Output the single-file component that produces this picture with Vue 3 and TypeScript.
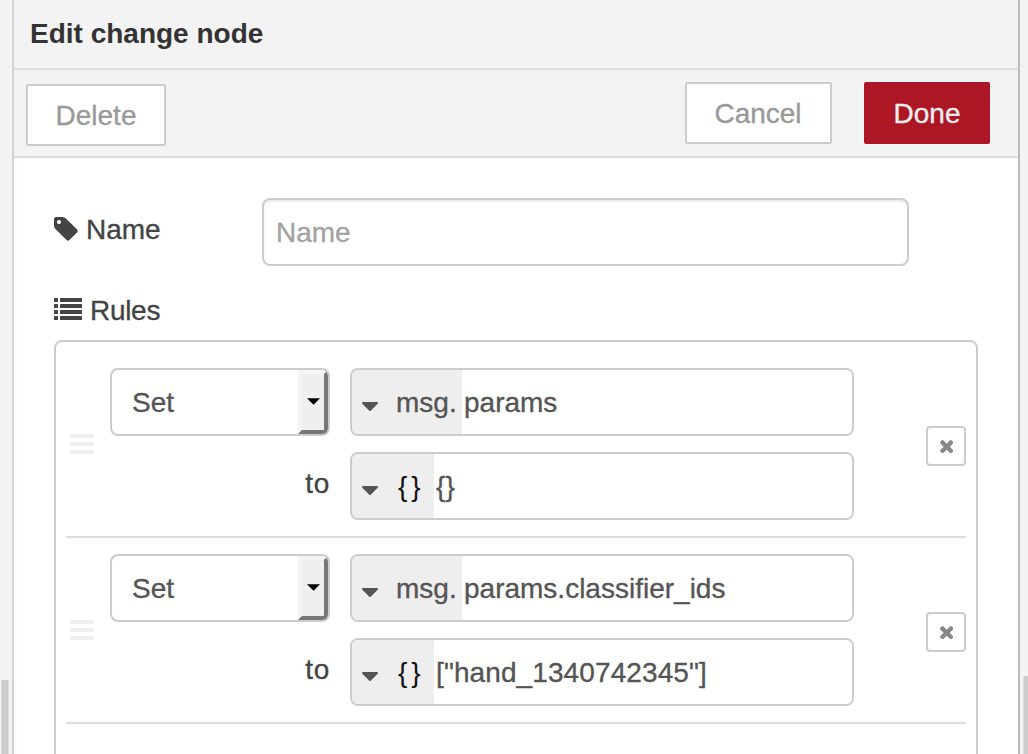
<script setup lang="ts">
import { ref } from 'vue'

interface Operand {
  prefix: string
  kind: 'msg' | 'json'
  value: string
}

interface Rule {
  id: number
  action: string
  property: Operand
  target: Operand
}

const name = ref('')

const rules = ref<Rule[]>([
  {
    id: 1,
    action: 'Set',
    property: { prefix: 'msg.', kind: 'msg', value: 'params' },
    target: { prefix: '{}', kind: 'json', value: '{}' },
  },
  {
    id: 2,
    action: 'Set',
    property: { prefix: 'msg.', kind: 'msg', value: 'params.classifier_ids' },
    target: { prefix: '{}', kind: 'json', value: '["hand_1340742345"]' },
  },
])

const operands = (rule: Rule): Operand[] => [rule.property, rule.target]

function removeRule(id: number) {
  rules.value = rules.value.filter((r) => r.id !== id)
}
</script>

<template>
  <div class="page">
    <div class="gutter gutter-left"><div class="thumb"></div></div>
    <main class="tray">
      <header class="title">Edit change node</header>
      <div class="toolbar">
        <button class="btn delete">Delete</button>
        <div class="actions">
          <button class="btn cancel">Cancel</button>
          <button class="btn primary">Done</button>
        </div>
      </div>
      <form class="body" @submit.prevent>
        <div class="name-row">
          <label class="label" for="node-name">
            <svg class="tag" viewBox="0 0 1536 1792">
              <path d="M448 448q0-53-37.5-90.5t-90.5-37.5-90.5 37.5-37.5 90.5 37.5 90.5 90.5 37.5 90.5-37.5 37.5-90.5zm1067 576q0 53-37 90l-491 492q-39 37-91 37-53 0-90-37l-715-716q-38-37-64.5-101t-26.5-117v-416q0-52 38-90t90-38h416q53 0 117 26.5t102 64.5l715 714q37 39 37 91z" />
            </svg>
            <span>Name</span>
          </label>
          <input id="node-name" v-model="name" class="name-input" placeholder="Name" />
        </div>
        <div class="label rules-label">
          <svg class="list" viewBox="0 0 28 22">
            <g v-for="i in 4" :key="i">
              <rect x="0" :y="(i - 1) * 6" width="4" height="4" rx="0.5" />
              <rect x="6" :y="(i - 1) * 6" width="22" height="4" rx="0.5" />
            </g>
          </svg>
          <span>Rules</span>
        </div>
        <div class="rules">
          <div v-for="rule in rules" :key="rule.id" class="rule">
            <div class="handle"><i></i><i></i><i></i></div>
            <div class="verbs">
              <div class="select">
                <span class="select-text">{{ rule.action }}</span>
                <span class="select-button">
                  <svg viewBox="0 0 14 7"><path d="M0 0H14L7 7Z" /></svg>
                </span>
              </div>
              <div class="to">to</div>
            </div>
            <div class="fields">
              <div v-for="(op, i) in operands(rule)" :key="i" class="typed">
                <div class="prefix" :class="op.kind">
                  <svg viewBox="384 640 1024 576">
                    <path d="M1408 704q0 26-19 45l-448 448q-19 19-45 19t-45-19l-448-448q-19-19-19-45t19-45 45-19h896q26 0 45 19t19 45z" />
                  </svg>
                  <span>{{ op.prefix }}</span>
                </div>
                <input v-model="op.value" class="value" :class="{ literal: op.kind === 'json' }" spellcheck="false" />
              </div>
            </div>
            <button class="remove" aria-label="Remove rule" @click="removeRule(rule.id)">
              <svg viewBox="302 366 1188 1188">
                <path d="M1490 1322q0 40-28 68l-136 136q-28 28-68 28t-68-28l-294-294-294 294q-28 28-68 28t-68-28l-136-136q-28-28-28-68t28-68l294-294-294-294q-28-28-28-68t28-68l136-136q28-28 68-28t68 28l294 294 294-294q28-28 68-28t68 28l136 136q28 28 28 68t-28 68l-294 294 294 294q28 28 28 68z" />
              </svg>
            </button>
          </div>
        </div>
      </form>
    </main>
    <div class="gutter gutter-right"><div class="thumb"></div></div>
  </div>
</template>

<style>
body {
  overflow: hidden;
}
</style>

<style scoped>
.page,
.page * {
  box-sizing: border-box;
}
.page {
  display: flex;
  width: 1028px;
  height: 754px;
  overflow: hidden;
  background: #f3f3f3;
  color: #444;
  font: 28px/40px "Liberation Sans", Arial, sans-serif;
  -webkit-text-stroke: 0.35px currentColor;
}
button,
input {
  font: inherit;
  margin: 0;
}
svg {
  display: block;
  flex: none;
  fill: currentColor;
}
.gutter {
  flex: none;
}
.gutter-left {
  width: 12px;
  padding: 680px 0 0 1px;
}
.gutter-left .thumb {
  width: 8px;
  height: 74px;
  background: #ccc;
  border: solid #dedede;
  border-width: 0 1px;
}
.gutter-right {
  width: 8px;
  padding: 676px 0 0 3px;
}
.gutter-right .thumb {
  height: 78px;
  background: #ccc;
  border-left: 1px solid #dedede;
}
.tray {
  width: 1008px;
  height: 754px;
  overflow: hidden;
  background: #fff;
  border-left: 2px solid #d3d3d3;
  border-right: 2px solid #bbb;
}
.title {
  height: 70px;
  padding: 14px 16px 0;
  background: #f3f3f3;
  border-bottom: 2px solid #ddd;
  color: #333;
  font-weight: bold;
  -webkit-text-stroke-width: 0;
}
.toolbar {
  display: flex;
  justify-content: space-between;
  height: 88px;
  padding: 12px 28px 0 12px;
  background: #f3f3f3;
  border-bottom: 2px solid #ddd;
}
.actions {
  display: flex;
  gap: 32px;
}
.btn {
  height: 62px;
  padding: 2px 0 0;
  background: #fff;
  border: 2px solid #ccc;
  border-radius: 2px;
  color: #999;
}
.delete {
  width: 140px;
  margin-top: 2px;
}
.cancel {
  width: 147px;
  padding-right: 1px;
}
.primary {
  width: 126px;
  background: #ad1625;
  border-color: #ad1625;
  color: #eee;
}
.body {
  padding: 40px 40px 0;
  box-shadow: inset 6px 0 6px -6px rgba(0, 0, 0, 0.04);
}
.name-row {
  display: flex;
  height: 68px;
}
.label {
  display: flex;
  align-items: flex-start;
  width: 208px;
}
.name-row .label {
  padding-top: 12px;
  gap: 8px;
}
.tag {
  width: 24px;
  height: 28px;
  margin-top: 5px;
}
.name-input {
  width: 647px;
  height: 68px;
  padding: 2px 12px 0;
  background: #fff;
  border: 2px solid #ccc;
  border-radius: 8px;
  box-shadow: inset 0 2px 2px rgba(0, 0, 0, 0.075);
  color: #555;
  outline: none;
}
.name-input::placeholder {
  color: #a3a3a3;
  opacity: 1;
}
.rules-label {
  height: 40px;
  margin-top: 25px;
  gap: 8px;
  letter-spacing: -0.3px;
}
.list {
  width: 28px;
  height: 22px;
  margin-top: 7px;
}
.rules {
  width: 924px;
  height: 480px;
  margin-top: 9px;
  padding: 10px;
  border: 2px solid #ccc;
  border-radius: 8px;
}
.rule {
  display: flex;
  height: 186px;
  padding: 16px 0 16px 4px;
  border-bottom: 2px solid #ddd;
}
.handle {
  display: flex;
  flex-direction: column;
  justify-content: center;
  gap: 4px;
  width: 24px;
}
.handle i {
  height: 4px;
  background: #eee;
  border-radius: 1px;
}
.verbs {
  width: 220px;
  margin-left: 16px;
}
.select {
  display: flex;
  align-items: center;
  justify-content: space-between;
  height: 68px;
  padding-left: 20px;
  border: 2px solid #ccc;
  border-radius: 8px;
  overflow: hidden;
  color: #555;
}
.select-text {
  padding-top: 2px;
}
.select-button {
  display: flex;
  align-items: center;
  justify-content: center;
  width: 30px;
  height: 64px;
  background: #efefef;
  border: 4px solid;
  border-color: #f4f4f4 #777 #777 #f4f4f4;
  color: #000;
}
.select-button svg {
  width: 13px;
  height: 7px;
  margin-bottom: 1px;
}
.to {
  margin-top: 28px;
  text-align: right;
  letter-spacing: 0.7px;
}
.fields {
  display: flex;
  flex-direction: column;
  gap: 16px;
  width: 504px;
  margin-left: 20px;
}
.typed {
  display: flex;
  height: 68px;
  border: 2px solid #ccc;
  border-radius: 8px;
  overflow: hidden;
  color: #555;
}
.prefix {
  display: flex;
  flex: none;
  align-items: center;
  padding-left: 10px;
  background: #eee;
}
.prefix svg {
  width: 16px;
  height: 9px;
  margin-top: 8px;
}
.prefix span {
  margin-left: 18px;
  padding-top: 2px;
}
.msg {
  width: 110px;
}
.json {
  width: 82px;
}
.prefix.json span {
  margin-left: 20px;
  color: #111;
  letter-spacing: 4px;
  -webkit-text-stroke-width: 0;
}
.value {
  flex: 1;
  min-width: 0;
  padding: 2px 2px 0;
  background: #fff;
  border: 0;
  outline: none;
  color: inherit;
}
.literal {
  letter-spacing: 0.1px;
}
.remove {
  display: flex;
  align-items: center;
  justify-content: center;
  width: 40px;
  height: 40px;
  margin: 58px 0 0 72px;
  padding: 1px 0 0 1px;
  background: #fff;
  border: 2px solid #ccc;
  border-radius: 4px;
  color: #888;
}
.remove svg {
  width: 13.4px;
  height: 13.4px;
}
</style>
